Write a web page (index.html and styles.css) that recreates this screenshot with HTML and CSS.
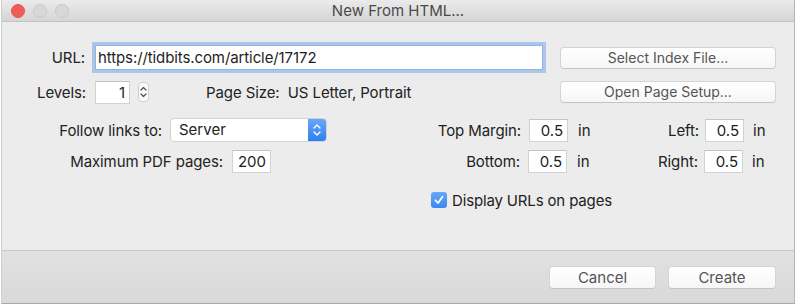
FILE: index.html
```html
<!DOCTYPE html>
<html>
	<head>
		<meta charset="utf-8">
		<title>New From HTML...</title>
		<link rel="stylesheet" href="styles.css">
	</head>
	<body>
		<div class="window">
			<header class="titlebar">
				<div class="lights">
					<span class="light close"></span>
					<span class="light"></span>
					<span class="light"></span>
				</div>
				<div class="title">New From HTML...</div>
			</header>
			<main class="content">
				<div class="row row-url">
					<label class="lbl w-url">URL:</label>
					<div class="field url-field focus">https://tidbits.com/article/17172</div>
					<div class="spacer"></div>
					<div class="button">Select Index File...</div>
				</div>
				<div class="row row-levels">
					<label class="lbl w-levels">Levels:</label>
					<div class="field num levels-field">1</div>
					<div class="stepper">
						<svg width="11" height="20" viewBox="0 0 11 20">
							<path d="M3 8 L5.5 5.5 L8 8" fill="none" stroke="#555" stroke-width="1.3" stroke-linecap="round" stroke-linejoin="round"/>
							<path d="M3 12 L5.5 14.5 L8 12" fill="none" stroke="#555" stroke-width="1.3" stroke-linecap="round" stroke-linejoin="round"/>
						</svg>
					</div>
					<div class="page-size">Page Size:&nbsp; US Letter, Portrait</div>
					<div class="spacer"></div>
					<div class="button">Open Page Setup...</div>
				</div>
				<div class="row row-follow">
					<label class="lbl w-follow">Follow links to:</label>
					<div class="popup">
						<span class="popup-text">Server</span>
						<span class="popup-arrows">
							<svg width="18" height="24" viewBox="0 0 18 24">
								<path d="M6 10 L9 7 L12 10" fill="none" stroke="#fff" stroke-width="1.4" stroke-linecap="round" stroke-linejoin="round"/>
								<path d="M6 14 L9 17 L12 14" fill="none" stroke="#fff" stroke-width="1.4" stroke-linecap="round" stroke-linejoin="round"/>
							</svg>
						</span>
					</div>
					<label class="lbl w-top">Top Margin:</label>
					<div class="field num small">0.5</div>
					<span class="unit">in</span>
					<label class="lbl w-side">Left:</label>
					<div class="field num small side">0.5</div>
					<span class="unit side-unit">in</span>
				</div>
				<div class="row row-max">
					<label class="lbl w-max">Maximum PDF pages:</label>
					<div class="field num small max-field">200</div>
					<label class="lbl w-bottom">Bottom:</label>
					<div class="field num small">0.5</div>
					<span class="unit">in</span>
					<label class="lbl w-side">Right:</label>
					<div class="field num small side">0.5</div>
					<span class="unit side-unit">in</span>
				</div>
				<div class="row row-check">
					<span class="checkbox">
						<svg width="16" height="16" viewBox="0 0 16 16">
							<path d="M4.5 8.3 L7 11 L11.5 4.8" fill="none" stroke="#fff" stroke-width="1.8" stroke-linecap="round" stroke-linejoin="round"/>
						</svg>
					</span>
					<span class="check-text">Display URLs on pages</span>
				</div>
			</main>
			<footer class="footer">
				<div class="button foot-btn">Cancel</div>
				<div class="button foot-btn create">Create</div>
			</footer>
		</div>
	</body>
</html>
```

FILE: styles.css
```css
* {
	margin: 0;
	padding: 0;
	box-sizing: border-box;
}
body {
	background: #ffffff;
	font-family: Inter, "Liberation Sans", sans-serif;
	font-size: 15px;
	color: #222222;
}
.window {
	display: flex;
	flex-direction: column;
	width: 794px;
	height: 304px;
	margin-left: 1px;
	background: #ececec;
	border-right: 1px solid #b5b5b5;
	border-bottom: 1px solid #a9a9a9;
	border-left: 1px solid #cfcfcf;
}

/* title bar */
.titlebar {
	display: flex;
	align-items: center;
	height: 22px;
	flex: none;
	background: linear-gradient(#ebebeb, #d5d5d5);
	border-bottom: 1px solid #c2c2c2;
	position: relative;
}
.lights {
	display: flex;
	gap: 8px;
	padding-left: 9px;
}
.light {
	width: 14px;
	height: 14px;
	border-radius: 50%;
	background: #d8d8d8;
	border: 1px solid #c8c8c8;
}
.light.close {
	background: #ec5f57;
	border-color: #e2544c;
}
.title {
	position: absolute;
	left: 0;
	right: 0;
	text-align: center;
	font-size: 15px;
	color: #4a4a4a;
	pointer-events: none;
}

/* dialog body */
.content {
	flex: auto;
	padding: 20px 18px 0 0;
	border-bottom: 1px solid #c7c7c7;
}
.row {
	display: flex;
	align-items: center;
}
.spacer {
	flex: auto;
}
.lbl {
	flex: none;
	text-align: right;
	white-space: nowrap;
	letter-spacing: -0.1px;
}
.w-url { width: 83px; }
.w-levels { width: 84px; }
.w-follow { width: 160px; }
.w-max { width: 221px; }
.w-top { width: 194px; }
.w-bottom { width: 249px; }
.w-side { width: 101px; }

.field {
	flex: none;
	height: 23px;
	background: #ffffff;
	border: 1px solid #d2d2d2;
	border-top-color: #c4c4c4;
	font-size: 15px;
	line-height: 21px;
	padding: 0 4px;
	white-space: nowrap;
	color: #1e1e1e;
}
.num {
	text-align: right;
}
.row-url {
	height: 31px;
}
.url-field {
	width: 448px;
	height: 25px;
	margin-left: 10px;
	line-height: 23px;
	padding-left: 2px;
	letter-spacing: -0.1px;
}
.focus {
	border-color: #8fb3e3;
	box-shadow: 0 0 0 3px rgba(122, 168, 230, 0.55);
}
.button {
	flex: none;
	width: 216px;
	height: 22px;
	background: linear-gradient(#ffffff, #f6f6f6);
	border: 1px solid #d4d4d4;
	border-bottom-color: #c4c4c4;
	border-radius: 4px;
	text-align: center;
	line-height: 20px;
	font-size: 14px;
	color: #555555;
}

.row-levels {
	margin-top: 7px;
	height: 24px;
}
.levels-field {
	width: 35px;
	margin-left: 9px;
}
.stepper {
	flex: none;
	width: 11px;
	height: 20px;
	margin-left: 8px;
	background: #fbfbfb;
	border: 1px solid #d0d0d0;
	border-radius: 4px;
	display: flex;
	align-items: center;
	justify-content: center;
}
.stepper svg {
	margin: -1px;
}
.page-size {
	margin-left: 57px;
	white-space: nowrap;
	letter-spacing: -0.1px;
}

.row-follow {
	margin-top: 14px;
	height: 24px;
}
.popup {
	flex: none;
	display: flex;
	width: 157px;
	height: 24px;
	margin-left: 8px;
	background: #ffffff;
	border: 1px solid #d2d2d2;
	border-radius: 4px;
	overflow: hidden;
}
.popup-text {
	flex: auto;
	padding-left: 8px;
	line-height: 22px;
	font-size: 15px;
}
.popup-arrows {
	flex: none;
	width: 18px;
	background: linear-gradient(#6aa6f7, #2d7ff0);
	display: flex;
	align-items: center;
	justify-content: center;
}
.popup-arrows svg {
	margin-top: -1px;
}
.small {
	width: 39px;
	margin-left: 8px;
}
.small.side {
	margin-left: 6px;
}
.unit {
	flex: none;
	width: 20px;
	margin-left: 10px;
	font-size: 15px;
}
.unit.side-unit {
	margin-left: 9px;
}

.row-max {
	margin-top: 8px;
	height: 23px;
}
.max-field {
	margin-left: 9px;
}

.row-check {
	margin-top: 19px;
	height: 16px;
	padding-left: 429px;
}
.checkbox {
	flex: none;
	width: 16px;
	height: 16px;
	border-radius: 3px;
	background: linear-gradient(#69a6f6, #3a88f1);
	display: flex;
}
.check-text {
	margin-left: 5px;
	font-size: 15px;
	letter-spacing: -0.15px;
}

/* footer */
.footer {
	flex: none;
	height: 52px;
	display: flex;
	justify-content: flex-end;
	align-items: center;
	gap: 12px;
	padding: 1px 18px 0 0;
	background: linear-gradient(#e1e1e1, #d9d9d9);
}
.foot-btn {
	width: 107px;
	height: 23px;
	font-size: 15px;
	line-height: 21px;
}
.foot-btn.create {
	width: 108px;
}
```
